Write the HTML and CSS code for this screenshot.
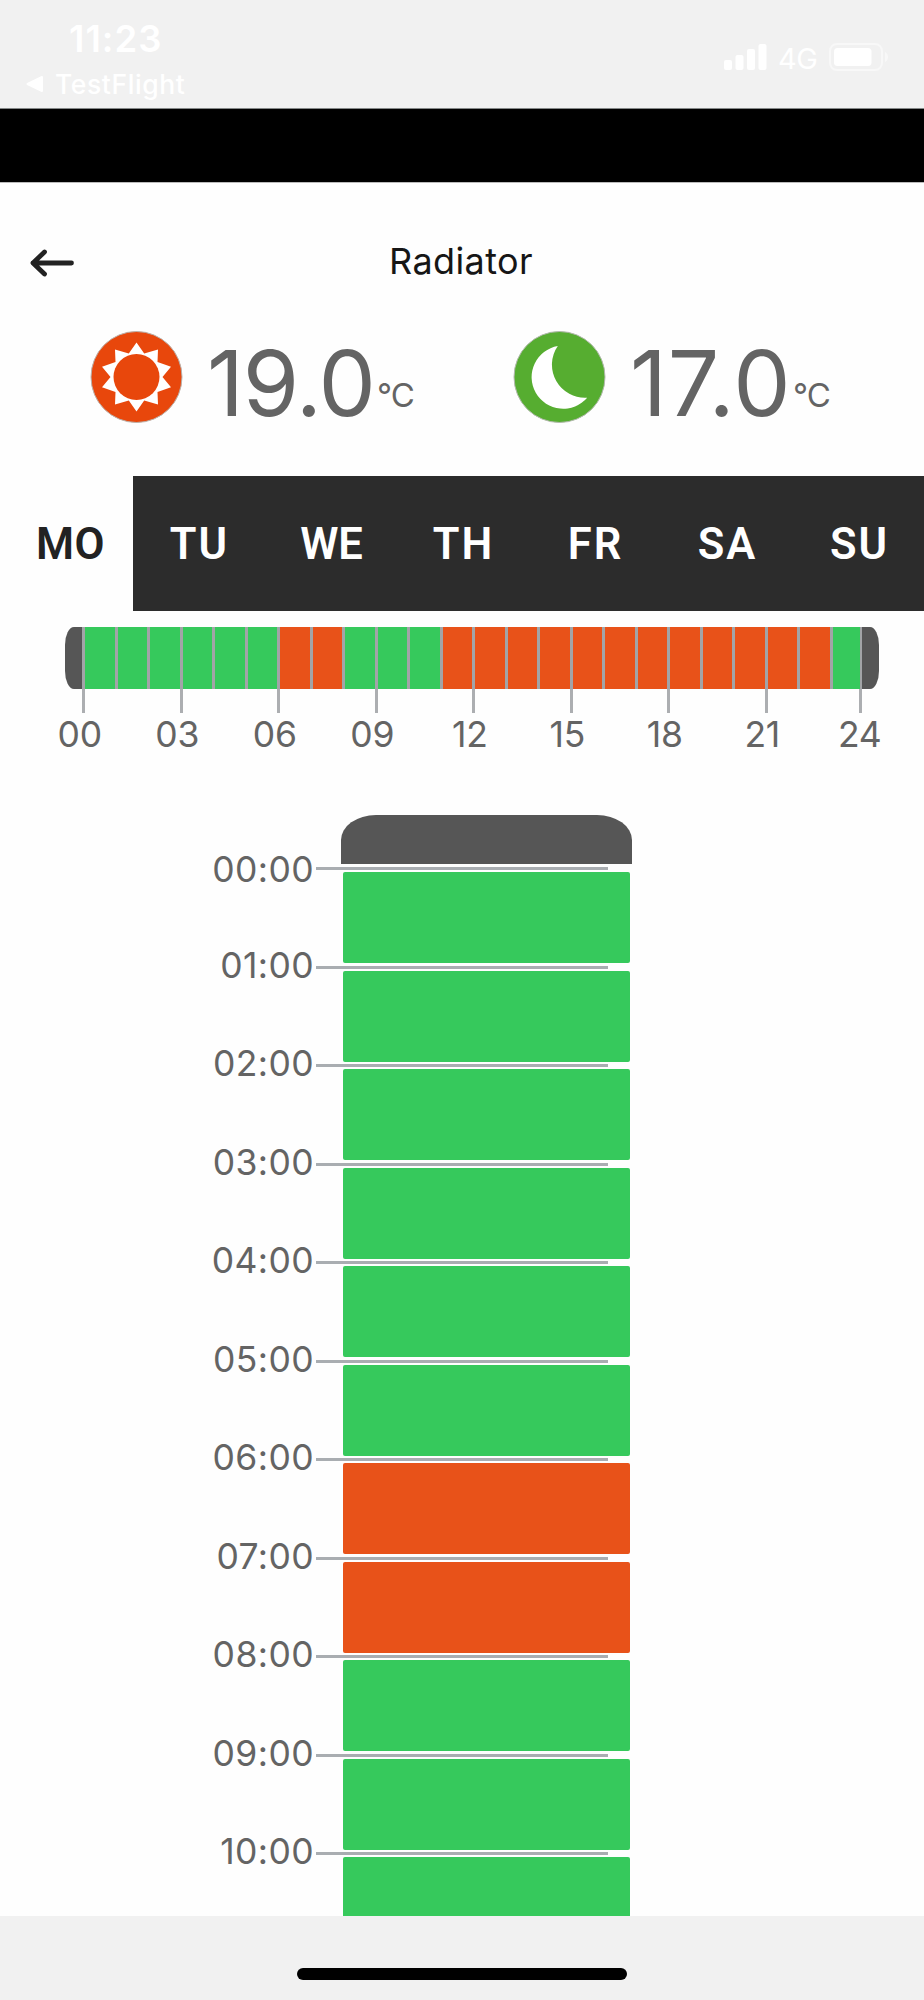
FILE: index.html
```html
<!DOCTYPE html>
<html lang="en">
<head>
<meta charset="utf-8">
<title>Radiator</title>
<link rel="stylesheet" href="styles.css">
</head>
<body>
<div class="screen">
  <header class="status">
    <div class="status-left">
      <div class="clock">11:23</div>
      <div class="return-app">
        <svg width="18" height="18" viewBox="0 0 18 18"><path d="M1.5 9 16 2v14z" fill="#fff" stroke="#fff" stroke-width="2" stroke-linejoin="round"/></svg>
        <span>TestFlight</span>
      </div>
    </div>
    <div class="status-right">
      <svg width="43" height="28" viewBox="0 0 43 28" fill="#fff"><rect x="0" y="17" width="8" height="10" rx="2"/><rect x="11.5" y="12" width="8" height="15" rx="2"/><rect x="23" y="6" width="8" height="21" rx="2"/><rect x="34.5" y="1" width="8" height="26" rx="2"/></svg>
      <span class="network">4G</span>
      <svg class="battery" width="61" height="28" viewBox="0 0 61 28"><rect x="1" y="1" width="52" height="26" rx="7" fill="none" stroke="#f8f8f8" stroke-width="2"/><rect x="5" y="5" width="37.500" height="18" rx="3.500" fill="#fff"/><path d="M56 9c4 2 4 8 0 10z" fill="#f8f8f8"/></svg>
    </div>
  </header>
  <div class="banner"></div>

  <main class="content">
    <div class="titlebar">
      <svg class="back" width="44" height="30" viewBox="0 0 44 30" fill="none" stroke="#222" stroke-width="4.800" stroke-linecap="round" stroke-linejoin="round"><path d="M41.500 15H3M14.500 4 3 15l11.500 11"/></svg>
      <h1 class="title">Radiator</h1>
    </div>

    <section class="temps">
      <div class="temp day">
        <svg width="94" height="94" viewBox="-47.500 -47 94 94"><circle r="45.500" fill="#e8470c" stroke="#b9b3ae" stroke-width="1"/><path fill="#fff" d="M0-34.500 7.700-23.500 21.500-27.500 21-15 34.500-10.300 26 0 34.500 10.300 21 15 21.500 27.500 7.700 23.500 0 34.500-7.700 23.500-21.500 27.500-21 15-34.500 10.300-26 0-34.500-10.300-21-15-21.500-27.500-7.700-23.500z"/><circle r="23" fill="#e8470c"/></svg>
        <span class="value">19.0</span><span class="unit">°C</span>
      </div>
      <div class="temp night">
        <svg width="94" height="94" viewBox="-47.500 -47 94 94"><circle r="45.500" fill="#56ad30" stroke="#b3b9ae" stroke-width="1"/><path fill="#fff" d="M-1.700-31A31.600 31.600 0 1 0 27.700 20.700 33 33 0 0 1-1.700-31z"/></svg>
        <span class="value">17.0</span><span class="unit">°C</span>
      </div>
    </section>

    <nav class="days">
      <a class="day-tab active">MO</a><a class="day-tab">TU</a><a class="day-tab wide">WE</a><a class="day-tab">TH</a><a class="day-tab">FR</a><a class="day-tab">SA</a><a class="day-tab">SU</a>
    </nav>

    <section class="overview">
      <div class="strip">
        <i class="end start"></i>
        <i class="cell tick"></i><i class="cell"></i><i class="cell"></i>
        <i class="cell tick"></i><i class="cell"></i><i class="cell"></i>
        <i class="cell warm tick"></i><i class="cell warm"></i><i class="cell"></i>
        <i class="cell tick"></i><i class="cell"></i><i class="cell warm"></i>
        <i class="cell warm tick"></i><i class="cell warm"></i><i class="cell warm"></i>
        <i class="cell warm tick"></i><i class="cell warm"></i><i class="cell warm"></i>
        <i class="cell warm tick"></i><i class="cell warm"></i><i class="cell warm"></i>
        <i class="cell warm tick"></i><i class="cell warm"></i><i class="cell"></i>
        <i class="end finish tick"></i>
      </div>
      <div class="scale">
        <span>00</span><span>03</span><span>06</span><span>09</span><span>12</span><span>15</span><span>18</span><span>21</span><span>24</span>
      </div>
    </section>

    <section class="schedule">
      <div class="top-cap"></div>
      <div class="hour first"><span class="time">00:00</span><div class="slot"></div></div>
      <div class="hour"><span class="time">01:00</span><div class="slot"></div></div>
      <div class="hour"><span class="time">02:00</span><div class="slot"></div></div>
      <div class="hour"><span class="time">03:00</span><div class="slot"></div></div>
      <div class="hour"><span class="time">04:00</span><div class="slot"></div></div>
      <div class="hour"><span class="time">05:00</span><div class="slot"></div></div>
      <div class="hour"><span class="time">06:00</span><div class="slot warm"></div></div>
      <div class="hour"><span class="time">07:00</span><div class="slot warm"></div></div>
      <div class="hour"><span class="time">08:00</span><div class="slot"></div></div>
      <div class="hour"><span class="time">09:00</span><div class="slot"></div></div>
      <div class="hour"><span class="time">10:00</span><div class="slot"></div></div>
    </section>
  </main>

  <footer class="home"><div class="home-bar"></div></footer>
</div>
</body>
</html>
```

FILE: styles.css
```css
* { box-sizing: border-box; }
body {
  margin: 0;
  background: #fefefe;
  color: #646464;
  font-family: Inter, Roboto, sans-serif;
}
svg { display: block; flex: none; }
.screen {
  width: 924px;
  height: 2000px;
  display: flex;
  flex-direction: column;
  overflow: hidden;
}

/* status bar */
.status {
  height: 108px;
  flex: none;
  background: #f1f1f1;
  color: #fff;
  display: flex;
  justify-content: space-between;
  padding: 18px 34px 0 26px;
}
.clock {
  padding-left: 43px;
  font-size: 36.500px;
  line-height: 42px;
  font-weight: 600;
  letter-spacing: 1px;
}
.return-app {
  display: flex;
  align-items: center;
  gap: 11px;
  margin-top: 9px;
  font-size: 26.500px;
  line-height: 30px;
  letter-spacing: 0.600px;
  font-weight: 500;
}
.status-right {
  display: flex;
  height: 28px;
  align-items: center;
  margin-top: 25px;
}
.network {
  width: 62px;
  padding: 3px 0 0 11px;
  font-size: 29px;
  line-height: 28px;
  letter-spacing: -0.500px;
}
.banner {
  height: 75px;
  flex: none;
  background: #000;
  border-top: 1px solid #848888;
  border-bottom: 1px solid #bbb;
}

/* page */
.content {
  height: 1733px;
  flex: none;
  overflow: hidden;
}
.titlebar {
  height: 142px;
  display: grid;
  grid-template-columns: 98px 1fr 100px;
  padding-top: 57px;
}
.back { margin: 8px 0 0 30px; }
.title {
  margin: 0;
  text-align: center;
  font-size: 36px;
  line-height: 42px;
  font-weight: 400;
  letter-spacing: 0.400px;
  color: #161616;
}
.temps {
  height: 151px;
  display: flex;
  padding-left: 89px;
}
.temp {
  width: 423px;
  flex: none;
  height: 104px;
  display: flex;
  align-items: flex-start;
  padding-top: 5px;
  white-space: nowrap;
}
.value {
  width: 169px;
  margin-left: 24px;
  padding-top: 3px;
  font-size: 91px;
  line-height: 100px;
  letter-spacing: -1.200px;
}
.night .value {
  width: 162px;
  letter-spacing: 0.700px;
}
.unit {
  margin: 45px 0 0 1px;
  font-size: 33px;
  line-height: 40px;
  letter-spacing: -1px;
}

/* weekday tabs */
.days {
  height: 135px;
  display: grid;
  grid-template-columns: 133px repeat(6, 132px);
  background: #2c2c2c;
}
.day-tab {
  padding-left: 1px;
  color: #fff;
  text-align: center;
  font-family: Roboto, Inter, sans-serif;
  font-size: 43.500px;
  line-height: 137px;
  font-weight: 600;
  letter-spacing: 2px;
}
.wide { letter-spacing: 0; }
.active {
  padding-left: 8px;
  background: #fefefe;
  color: #222;
  letter-spacing: 0.500px;
}

/* one-day overview */
.overview {
  height: 204px;
  padding-top: 16px;
}
.strip {
  height: 62px;
  margin-left: 65px;
  display: grid;
  grid-template-columns: 17px repeat(23, 32.500px) 30px 19px;
}
.cell {
  background: #36c95c;
  border-left: 3px solid #a2a4a7;
}
.warm { background: #e85219; }
.end { background: #565656; }
.start { border-radius: 9px 0 0 9px / 18px 0 0 18px; }
.finish {
  border-left: 2px solid #a2a4a7;
  border-radius: 0 9px 9px 0 / 0 18px 18px 0;
}
.tick { position: relative; }
.tick::after {
  content: "";
  position: absolute;
  left: -3px;
  top: 62px;
  width: 3px;
  height: 24px;
  background: #acaeb1;
}
.scale {
  display: grid;
  grid-template-columns: repeat(9, 97.500px);
  margin: 24px 0 0 31px;
  text-align: center;
  font-size: 35.500px;
  line-height: 43px;
  letter-spacing: -0.200px;
}

/* hourly schedule */
.schedule { display: flow-root; }
.top-cap {
  width: 291px;
  height: 49px;
  margin: 0 0 4px 341px;
  background: #565656;
  border-radius: 35px 35px 0 0 / 25px 25px 0 0;
}
.hour {
  position: relative;
  height: 98.500px;
  display: grid;
  grid-template-columns: 314px 287px;
  column-gap: 29px;
}
.hour::after {
  content: "";
  position: absolute;
  left: 316px;
  top: -1px;
  width: 291.500px;
  height: 3px;
  background: #a9adb1;
}
.time {
  height: 42px;
  margin-top: -22px;
  text-align: right;
  font-size: 35.500px;
  line-height: 42px;
  letter-spacing: 0.400px;
}
.first .time { margin-top: -19px; }
.slot {
  margin: 4px 0 3.500px;
  background: #36c95c;
  border-radius: 2px;
}
.slot.warm { background: #e85219; }

/* home indicator */
.home {
  flex: 1;
  background: #f1f1f1;
  padding: 52px 0 0 297px;
}
.home-bar {
  width: 330px;
  height: 12px;
  border-radius: 6px;
  background: #000;
}
```
